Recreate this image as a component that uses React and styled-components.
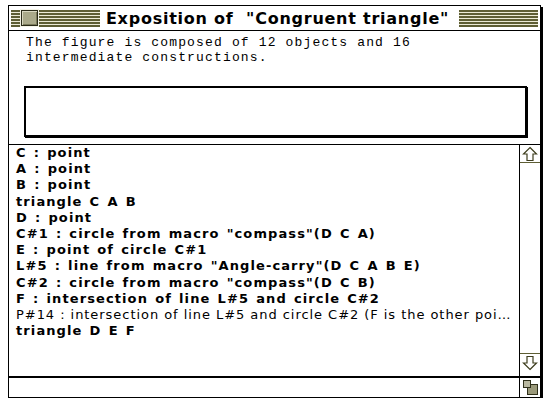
import styled, { createGlobalStyle } from 'styled-components'

const olive = '#5e5e34'

const GlobalStyle = createGlobalStyle`
  html, body {
    margin: 0;
    padding: 0;
    background: #fff;
  }
  * {
    box-sizing: border-box;
  }
`

const lines = [
    {text: 'C : point'},
    {text: 'A : point'},
    {text: 'B : point'},
    {text: 'triangle C A B'},
    {text: 'D : point'},
    {text: 'C#1 : circle from macro "compass"(D C A)'},
    {text: 'E : point of circle C#1'},
    {text: 'L#5 : line from macro "Angle-carry"(D C A B E)'},
    {text: 'C#2 : circle from macro "compass"(D C B)'},
    {text: 'F : intersection of line L#5 and circle C#2'},
    {text: 'P#14 : intersection of line L#5 and circle C#2 (F is the other poi…', narrow: true},
    {text: 'triangle D E F'},
]

const Window = styled.div`
  margin: 5px 0 0 8px;
  width: 533px;
  border: 1px solid #000;
  box-shadow: 2px 2px 0 #000;
  display: flex;
  flex-direction: column;
  background: #fff;
`
const TitleBar = styled.div`
  height: 25px;
  border-bottom: 1px solid #000;
  display: flex;
  align-items: center;
  padding: 0 2px 0 2px;
`
const Stripes = styled.div`
  flex: 1;
  height: 17px;
  display: flex;
  align-items: center;
  padding-left: ${p => p.$boxed ? '10px' : '0'};
  background: repeating-linear-gradient(to bottom, ${olive} 0 2px, #ecead6 2px 3px);
`
const CloseBox = styled.div`
  width: 17px;
  height: 16px;
  border: 1px solid #2a2a18;
  background: #aaa98a;
  outline: 1px solid #f4f3e6;
  box-shadow: inset 1px 1px 0 #d8d7c0, inset -1px -1px 0 #7a7a5a;
`
const Title = styled.div`
  padding: 0 10px 0 6px;
  font-family: "DejaVu Sans", sans-serif;
  font-weight: bold;
  font-size: 16px;
  letter-spacing: 0.75px;
  white-space: pre;
  color: #000;
`
const Header = styled.div`
  height: 114px;
  border-bottom: 1px solid #000;
  padding: 4px 0 0 17px;
  display: flex;
  flex-direction: column;
`
const Summary = styled.div`
  font-family: "Liberation Mono", monospace;
  font-size: 13px;
  letter-spacing: 1.15px;
  line-height: 15px;
  white-space: pre;
`
const NoteBox = styled.div`
  margin: 21px 0 0 -2px;
  width: 503px;
  height: 51px;
  border: 2px solid #000;
  box-shadow: 1px 1px 0 #000;
`
const ListArea = styled.div`
  height: 231px;
  display: flex;
`
const List = styled.div`
  flex: 1;
  padding: 0 0 0 7px;
`
const Line = styled.div`
  height: 16.2px;
  line-height: 16.2px;
  white-space: nowrap;
  font-family: "DejaVu Sans", sans-serif;
  font-size: 13px;
  font-weight: ${p => p.$narrow ? 'normal' : 'bold'};
  letter-spacing: ${p => p.$narrow ? '0.95px' : '1.1px'};
  word-spacing: ${p => p.$narrow ? '0' : '1.5px'};
  color: #000;
`
const ScrollBar = styled.div`
  width: 21px;
  border-left: 1px solid #000;
  display: flex;
  flex-direction: column;
  justify-content: space-between;
`
const ArrowBox = styled.div`
  height: ${p => p.$down ? '23px' : '18px'};
  display: flex;
  justify-content: center;
  align-items: ${p => p.$down ? 'flex-start' : 'center'};
  padding-top: ${p => p.$down ? '1px' : '0'};
  border-${p => p.$down ? 'top' : 'bottom'}: 1px solid ${olive};
`
const BottomBar = styled.div`
  height: 21px;
  border-top: 2px solid #000;
  display: flex;
  justify-content: flex-end;
`
const GrowBox = styled.div`
  width: 21px;
  border-left: 1px solid #000;
  display: flex;
  align-items: center;
  justify-content: center;
`

function Arrow({down}) {
    return (
        <svg width="16" height="16" viewBox="0 0 16 16"
             style={down ? {transform: 'scaleY(-1)'} : undefined}>
            <path d="M8 1.5 L14.5 8 L11 8 L11 14.5 L5 14.5 L5 8 L1.5 8 Z"
                  fill="none" stroke="#3e3e1e" strokeWidth="1.2"/>
        </svg>
    )
}

function Grow() {
    return (
        <svg width="15" height="15" viewBox="0 0 15 15">
            <rect x="4.5" y="4.5" width="10" height="10" fill="#9a997a" stroke="#2f2f1a"/>
            <rect x="0.5" y="0.5" width="7" height="7" fill="#b9b8a0" stroke="#2f2f1a"/>
        </svg>
    )
}

export default function App() {
    return (
        <>
            <GlobalStyle/>
            <Window>
                <TitleBar>
                    <Stripes $boxed>
                        <CloseBox/>
                    </Stripes>
                    <Title>Exposition of  "Congruent triangle"</Title>
                    <Stripes/>
                </TitleBar>
                <Header>
                    <Summary>{'The figure is composed of 12 objects and 16\nintermediate constructions.'}</Summary>
                    <NoteBox/>
                </Header>
                <ListArea>
                    <List>
                        {lines.map((l, i) => (
                            <Line key={i} $narrow={l.narrow}>{l.text}</Line>
                        ))}
                    </List>
                    <ScrollBar>
                        <ArrowBox><Arrow/></ArrowBox>
                        <ArrowBox $down><Arrow down/></ArrowBox>
                    </ScrollBar>
                </ListArea>
                <BottomBar>
                    <GrowBox><Grow/></GrowBox>
                </BottomBar>
            </Window>
        </>
    )
}
